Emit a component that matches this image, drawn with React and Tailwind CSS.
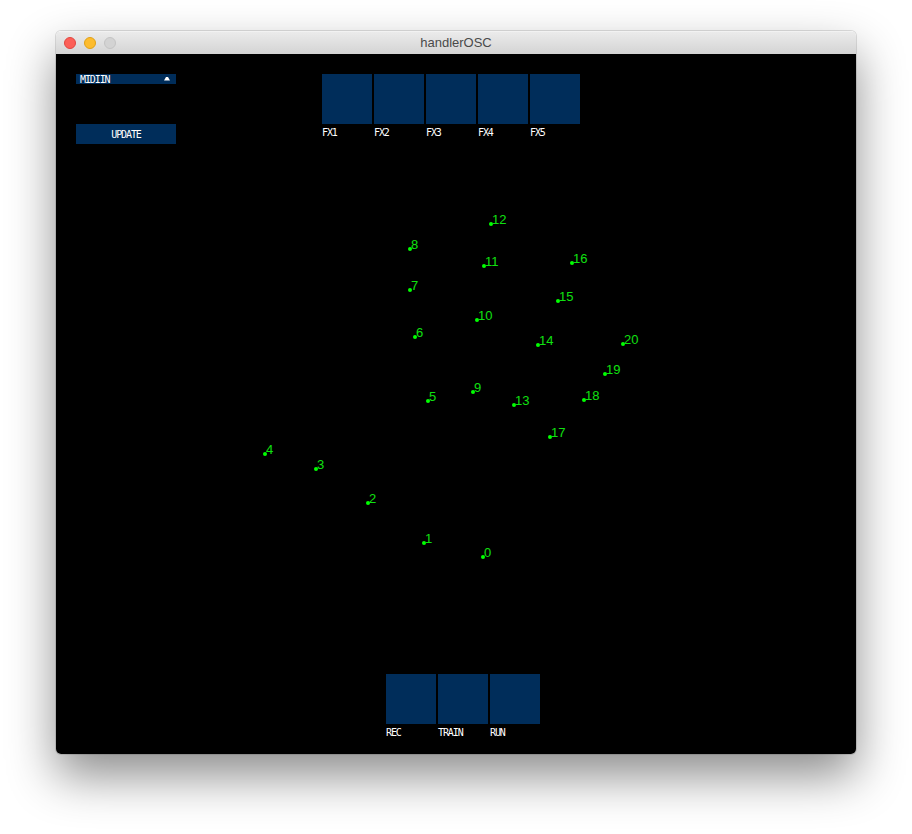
import React from "react";

// canvas coordinates (px) of the tracked points, origin = top-left of the black sketch area
const points = [
  [0, 427, 503],
  [1, 368, 489],
  [2, 312, 449],
  [3, 260, 415],
  [4, 209, 400],
  [5, 372, 347],
  [6, 359, 283],
  [7, 354, 236],
  [8, 354, 195],
  [9, 417, 338],
  [10, 421, 266],
  [11, 428, 212],
  [12, 435, 170],
  [13, 458, 351],
  [14, 482, 291],
  [15, 502, 247],
  [16, 516, 209],
  [17, 494, 383],
  [18, 528, 346],
  [19, 549, 320],
  [20, 567, 290],
];

const fx = ["FX1", "FX2", "FX3", "FX4", "FX5"];
const modes = ["REC", "TRAIN", "RUN"];

function P5Label({ children, className = "" }) {
  return (
    <span
      className={`font-['DejaVu_Sans_Mono',monospace] text-[10px] leading-[10px] tracking-[-1.1px] text-white uppercase ${className}`}
    >
      {children}
    </span>
  );
}

function Toggle({ label }) {
  return (
    <div className="flex w-[50px] flex-col">
      <div className="h-[50px] w-[50px] bg-[#002d5a]" />
      <P5Label className="mt-[4px]">{label}</P5Label>
    </div>
  );
}

function Point({ id, x, y }) {
  return (
    <div className="absolute" style={{ left: x, top: y }}>
      <div className="absolute -left-[2px] -top-[2px] h-[4px] w-[4px] rounded-full bg-[#00ff00]" />
      <span className="absolute left-[1px] -top-[11px] font-['Liberation_Sans',Arial,sans-serif] text-[13px] leading-[13px] whitespace-nowrap text-[#10e010]">
        {id}
      </span>
    </div>
  );
}

export default function App() {
  return (
    <div className="min-h-[834px] w-[912px] bg-white pl-[56px] pt-[31px]">
      <div className="flex w-[800px] flex-col overflow-hidden rounded-[5px] shadow-[0_0_0_1px_rgba(0,0,0,0.12),0_22px_48px_rgba(0,0,0,0.45)]">
        {/* title bar */}
        <div className="relative flex h-[23px] items-center border-t border-[#f2f2f2] bg-gradient-to-b from-[#ebebeb] to-[#d4d4d4] pl-[8px]">
          <div className="flex gap-[8px]">
            <span className="h-[12px] w-[12px] rounded-full border border-[#e2463f] bg-[#fc5f57]" />
            <span className="h-[12px] w-[12px] rounded-full border border-[#e1a116] bg-[#fdbc2e]" />
            <span className="h-[12px] w-[12px] rounded-full border border-[#c4c4c4] bg-[#d3d3d3]" />
          </div>
          <div className="absolute inset-0 flex items-center justify-center font-['Liberation_Sans',Arial,sans-serif] text-[13px] text-[#4a4a4a]">
            handlerOSC
          </div>
        </div>

        {/* sketch canvas */}
        <div className="relative flex h-[700px] flex-col bg-black">
          <div className="flex h-[620px] pl-[20px] pt-[20px]">
            <div className="flex w-[100px] flex-col">
              <div className="flex h-[10px] items-center justify-between bg-[#002d5a] pl-[4px] pr-[6px]">
                <P5Label className="pt-[1px]">MIDIIN</P5Label>
                <svg width="6" height="4" viewBox="0 0 6 4">
                  <polygon points="2,0 4,0 6,3.5 0,3.5" fill="#fff" />
                </svg>
              </div>
              <div className="mt-[40px] flex h-[20px] items-center justify-center bg-[#002d5a] pt-[1px]">
                <P5Label>UPDATE</P5Label>
              </div>
            </div>
            <div className="ml-[146px] flex gap-[2px]">
              {fx.map((f) => (
                <Toggle key={f} label={f} />
              ))}
            </div>
          </div>

          <div className="flex gap-[2px] pl-[330px]">
            {modes.map((m) => (
              <Toggle key={m} label={m} />
            ))}
          </div>

          {points.map(([id, x, y]) => (
            <Point key={id} id={id} x={x} y={y} />
          ))}
        </div>
      </div>
    </div>
  );
}
